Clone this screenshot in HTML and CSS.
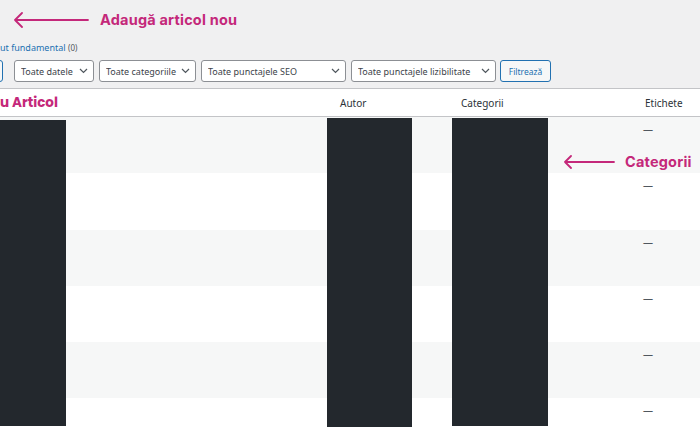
FILE: index.html
```html
<!DOCTYPE html>
<html lang="ro">
<head>
    <meta charset="UTF-8">
    <title>Articole</title>
    <link rel="stylesheet" href="styles.css">
</head>
<body>
    <div class="page">
        <div class="top-space"></div>

        <ul class="subsubsub">
            <li><a href="#">ut fundamental</a> <span class="count">(0)</span></li>
        </ul>

        <div class="tablenav">
            <button class="button action-cut"></button>
            <select class="filter f-dates"><option>Toate datele</option></select>
            <select class="filter f-cats"><option>Toate categoriile</option></select>
            <select class="filter f-seo"><option>Toate punctajele SEO</option></select>
            <select class="filter f-read"><option>Toate punctajele lizibilitate</option></select>
            <button class="button btn-filter">Filtrează</button>
        </div>

        <div class="posts">
            <div class="posts__head">
                <div class="col col-title">u Articol</div>
                <div class="col col-author">Autor</div>
                <div class="col col-cats">Categorii</div>
                <div class="col col-tags">Etichete</div>
            </div>
            <div class="posts__row"><div class="col col-title"></div><div class="col col-author"></div><div class="col col-cats"></div><div class="col col-tags">—</div></div>
            <div class="posts__row"><div class="col col-title"></div><div class="col col-author"></div><div class="col col-cats"></div><div class="col col-tags">—</div></div>
            <div class="posts__row"><div class="col col-title"></div><div class="col col-author"></div><div class="col col-cats"></div><div class="col col-tags">—</div></div>
            <div class="posts__row"><div class="col col-title"></div><div class="col col-author"></div><div class="col col-cats"></div><div class="col col-tags">—</div></div>
            <div class="posts__row"><div class="col col-title"></div><div class="col col-author"></div><div class="col col-cats"></div><div class="col col-tags">—</div></div>
            <div class="posts__row"><div class="col col-title"></div><div class="col col-author"></div><div class="col col-cats"></div><div class="col col-tags">—</div></div>
        </div>
    </div>

    <!-- zone ascunse -->
    <div class="redact redact--title"></div>
    <div class="redact redact--author"></div>
    <div class="redact redact--cats"></div>

    <!-- adnotari -->
    <div class="note note--add">
        <svg class="note__arrow" width="76" height="16" viewBox="0 0 76 16">
            <path d="M2 8 H75 M9 1 L2 8 L9 15" fill="none" stroke="currentColor" stroke-width="1.8" stroke-linecap="round" stroke-linejoin="round"/>
        </svg>
        <span class="note__text">Adaugă articol nou</span>
    </div>
    <div class="note note--cats">
        <svg class="note__arrow" width="52" height="14" viewBox="0 0 52 14">
            <path d="M2 7 H51 M8 1 L2 7 L8 13" fill="none" stroke="currentColor" stroke-width="1.8" stroke-linecap="round" stroke-linejoin="round"/>
        </svg>
        <span class="note__text">Categorii</span>
    </div>
</body>
</html>
```

FILE: styles.css
```css
* {
    margin: 0;
    padding: 0;
    box-sizing: border-box;
}

body {
    background: #f0f0f1;
    font-family: "Noto Sans", "Liberation Sans", sans-serif;
    color: #3c434a;
    width: 700px;
    height: 441px;
    overflow: hidden;
    position: relative;
}

:root {
    --pink: #c4287a;
    --blue: #2271b1;
    --redact: #23282d;
}

.top-space {
    height: 42px;
}

/* linkuri de filtrare */
.subsubsub {
    list-style: none;
    font-size: 9px;
    height: 14px;
    line-height: 12px;
}
.subsubsub a {
    color: var(--blue);
    text-decoration: none;
}
.subsubsub .count {
    color: #50575e;
    font-size: 8px;
}

/* bara de filtre */
.tablenav {
    display: flex;
    align-items: center;
    gap: 5px;
    height: 32px;
    padding-bottom: 2px;
}
.button,
.filter {
    height: 22px;
    border-radius: 3px;
    font-family: inherit;
    font-size: 9px;
}
.action-cut {
    width: 14px;
    margin-left: -11px;
    margin-right: 6px;
    background: #f6f7f7;
    border: 1px solid var(--blue);
}
.filter {
    appearance: none;
    -webkit-appearance: none;
    background: #fff url("data:image/svg+xml;utf8,<svg xmlns='http://www.w3.org/2000/svg' width='9' height='6' viewBox='0 0 9 6'><path d='M1 1 L4.5 4.5 L8 1' fill='none' stroke='%2350575e' stroke-width='1.2'/></svg>") no-repeat right 5px center;
    border: 1px solid #8c8f94;
    color: #3c434a;
    padding: 0 14px 0 6px;
}
.f-dates { width: 80px; }
.f-cats { width: 97px; }
.f-seo { width: 145px; }
.f-read { width: 145px; }
.btn-filter {
    width: 51px;
    background: #f6f7f7;
    border: 1px solid var(--blue);
    color: var(--blue);
    font-size: 8.5px;
    margin-left: -1px;
}

/* tabel articole */
.posts {
    background: #fff;
    border-top: 1px solid #c3c4c7;
}
.posts__head,
.posts__row {
    display: grid;
    grid-template-columns: 327px 125px 184px 1fr;
}
.posts__head {
    height: 28px;
    align-items: center;
    border-bottom: 1px solid #c3c4c7;
    font-size: 10px;
    color: #2c3338;
}
.posts__head .col-title {
    color: var(--pink);
    font-family: "Poppins", "Inter", "Noto Sans", sans-serif;
    font-weight: 700;
    font-size: 13.5px;
}
.posts__head .col-author { padding-left: 13px; }
.posts__head .col-cats { padding-left: 9px; }
.posts__head .col-tags { padding-left: 9px; }

.posts__row {
    height: 56.25px;
}
.posts__row:nth-child(even) {
    background: #f6f7f7;
}
.posts__row .col-tags {
    padding-left: 7px;
    padding-top: 5px;
    font-size: 10px;
    color: #50575e;
}

/* blocuri ascunse peste tabel */
.redact {
    position: absolute;
    background: var(--redact);
}
.redact--title { left: 0; top: 120px; width: 66px; height: 306px; }
.redact--author { left: 327px; top: 118px; width: 85px; height: 309px; }
.redact--cats { left: 452px; top: 118px; width: 96px; height: 308px; }

/* adnotari */
.note {
    position: absolute;
    display: flex;
    align-items: center;
    color: var(--pink);
}
.note__text {
    font-family: "Inter", "Noto Sans", sans-serif;
    font-weight: 700;
    font-size: 14.5px;
    letter-spacing: 0.2px;
}
.note--add {
    left: 13px;
    top: 11px;
    gap: 11px;
}
.note--cats {
    left: 563px;
    top: 153px;
    gap: 10px;
}
```
